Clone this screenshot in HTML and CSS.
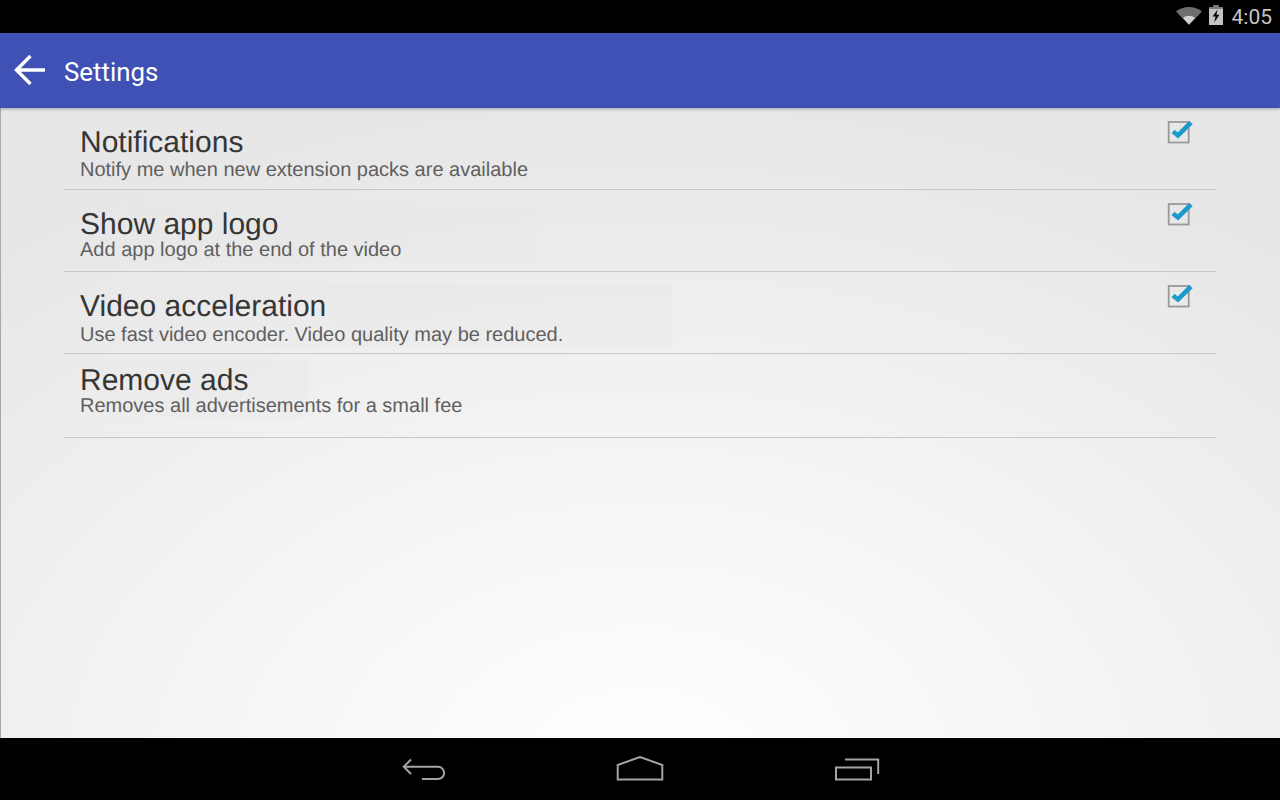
FILE: index.html
```html
<!DOCTYPE html>
<html lang="en">

<head>
    <meta charset="UTF-8">
    <title>Settings</title>
    <link rel="stylesheet" href="styles.css">
</head>

<body>
    <div class="status-bar">
        <svg class="wifi-icon" width="26" height="20" viewBox="0 0 26 20">
            <path d="M0 6.500C7 .5 19 .5 26 6.500L13 20Z" fill="#6e6e6e" />
            <path d="M7 13C10.300 10 15.700 10 19 13L13 19.600Z" fill="#d2d2d2" />
        </svg>
        <svg class="battery-icon" width="14" height="20" viewBox="0 0 14 20">
            <path d="M4.500 0H9.500V2H14V20H0V2H4.500Z" fill="#c4c4c4" />
            <path d="M4.500 0H9.500V2H14V4H0V2H4.500Z" fill="#7c7c7c" />
            <path d="M8.600 4.500L3.600 11.600H6.600L5.200 17.500L10.400 9.800H7.400Z" fill="#000" />
        </svg>
        <span class="clock">4:05</span>
    </div>

    <div class="action-bar">
        <svg class="back-arrow" width="32" height="32" viewBox="0 0 32 32">
            <path d="M31 16H3M16.500 2L2.500 16L16.500 30" fill="none" stroke="#fff" stroke-width="3.400" />
        </svg>
        <h1>Settings</h1>
    </div>

    <div class="content">
        <div class="settings-list">
            <div class="setting-item">
                <div class="setting-text">
                    <h3>Notifications</h3>
                    <p>Notify me when new extension packs are available</p>
                </div>
                <svg class="checkbox" width="28" height="28" viewBox="0 0 28 28">
                    <rect x="2.700" y="4" width="20" height="20.500" fill="none" stroke="#9a9a9a" stroke-width="1.800" />
                    <path d="M7 13.500L12 17.500L25 4.500" fill="none" stroke="#1c9bcb" stroke-width="4.600" />
                </svg>
            </div>
            <div class="setting-item logo-item">
                <div class="setting-text">
                    <h3>Show app logo</h3>
                    <p>Add app logo at the end of the video</p>
                </div>
                <svg class="checkbox" width="28" height="28" viewBox="0 0 28 28">
                    <rect x="2.700" y="4" width="20" height="20.500" fill="none" stroke="#9a9a9a" stroke-width="1.800" />
                    <path d="M7 13.500L12 17.500L25 4.500" fill="none" stroke="#1c9bcb" stroke-width="4.600" />
                </svg>
            </div>
            <div class="setting-item video-item">
                <div class="setting-text">
                    <h3>Video acceleration</h3>
                    <p>Use fast video encoder. Video quality may be reduced.</p>
                </div>
                <svg class="checkbox" width="28" height="28" viewBox="0 0 28 28">
                    <rect x="2.700" y="4" width="20" height="20.500" fill="none" stroke="#9a9a9a" stroke-width="1.800" />
                    <path d="M7 13.500L12 17.500L25 4.500" fill="none" stroke="#1c9bcb" stroke-width="4.600" />
                </svg>
            </div>
            <div class="setting-item ads-item">
                <div class="setting-text">
                    <h3>Remove ads</h3>
                    <p>Removes all advertisements for a small fee</p>
                </div>
            </div>
        </div>
    </div>

    <div class="nav-bar">
        <svg class="nav-back" width="46" height="26" viewBox="0 0 46 26">
            <path d="M10 3.500L2.800 10.800L10 18M3 10.800H37A6.100 6.100 0 0 1 37 23H21" fill="none" stroke="#a4a4a4" stroke-width="2" />
        </svg>
        <svg width="48" height="26" viewBox="0 0 48 26">
            <path d="M1.700 23.500V9L24 1L46.300 9V23.500Z" fill="none" stroke="#a4a4a4" stroke-width="2" />
        </svg>
        <svg class="nav-recent" width="46" height="26" viewBox="0 0 46 26">
            <path d="M2 11.500H37V23.500H2Z M11 3.500H44.200V18" fill="none" stroke="#a4a4a4" stroke-width="2" />
        </svg>
    </div>
</body>

</html>
```

FILE: styles.css
```css
html,
body {
    margin: 0;
    height: 100%;
}

body {
    display: flex;
    flex-direction: column;
    height: 800px;
    overflow: hidden;
    font-family: 'Liberation Sans', sans-serif;
    background-color: #000;
}

.status-bar {
    height: 33px;
    display: flex;
    align-items: center;
    justify-content: flex-end;
    background-color: #000;
    padding-right: 8px;
    font-family: 'Roboto', sans-serif;
}

.wifi-icon {
    margin-right: 7px;
    margin-top: -3px;
}

.battery-icon {
    margin-right: 9px;
    margin-top: -3px;
}

.clock {
    font-size: 21px;
    color: #c4c4c4;
}

.action-bar {
    height: 75px;
    display: flex;
    align-items: center;
    background-color: #3f51b5;
    padding-left: 14px;
    box-sizing: border-box;
    position: relative;
    box-shadow: 0 1px 3px rgba(0, 0, 0, 0.3);
    font-family: 'Roboto', sans-serif;
}

.action-bar h1 {
    margin: 2px 0 0 18px;
    font-size: 25.800px;
    font-weight: 400;
    color: #fff;
}

.back-arrow {
    margin-top: -1px;
}

.content {
    flex: 1;
    border-left: 1px solid #a8a8a8;
    background: radial-gradient(ellipse 1000px 660px at 640px 660px, #ffffff 0%, #f6f6f6 40%, #e7e7e7 100%);
}

.settings-list {
    margin: 0 64px 0 63px;
}

.setting-item {
    height: 82px;
    box-sizing: border-box;
    display: flex;
    justify-content: space-between;
    align-items: flex-start;
    border-bottom: 1px solid #c8c8c8;
    padding: 18px 22px 0 16px;
    background-repeat: no-repeat;
}

.setting-text {
    text-rendering: geometricPrecision;
}

.setting-text h3 {
    margin: 0;
    font-size: 30px;
    line-height: 34px;
    font-weight: 400;
    color: #363636;
}

.setting-text p {
    margin: -2px 0 0;
    font-size: 20px;
    line-height: 24px;
    color: #5f5f5f;
}

/* faint patches behind the text of the lower rows */
.logo-item {
    background-image: linear-gradient(to right, rgba(0, 0, 0, 0), rgba(0, 0, 0, 0.008) 50%);
    background-size: 473px 60px;
    background-position: 0 15px;
}

.logo-item p {
    margin-top: -4px;
}

.video-item {
    background-image: linear-gradient(to right, rgba(0, 0, 0, 0), rgba(0, 0, 0, 0.012) 50%);
    background-size: 609px 64px;
    background-position: 0 11px;
}

.video-item p {
    margin-top: -1px;
}

.ads-item {
    height: 84px;
    padding-top: 10px;
    background-image: linear-gradient(to right, rgba(0, 0, 0, 0), rgba(0, 0, 0, 0.01) 50%);
    background-size: 246px 58px;
    background-position: 0 6px;
}

.ads-item p {
    margin-top: -4px;
}

.checkbox {
    margin-top: -8px;
    filter: blur(0.4px);
}

.nav-bar {
    height: 62px;
    display: flex;
    align-items: center;
    justify-content: center;
    gap: 171px;
    background-color: #000;
}

.nav-back {
    margin-right: -2px;
}

.nav-recent {
    margin-left: -1px;
    margin-right: -1px;
}
```
